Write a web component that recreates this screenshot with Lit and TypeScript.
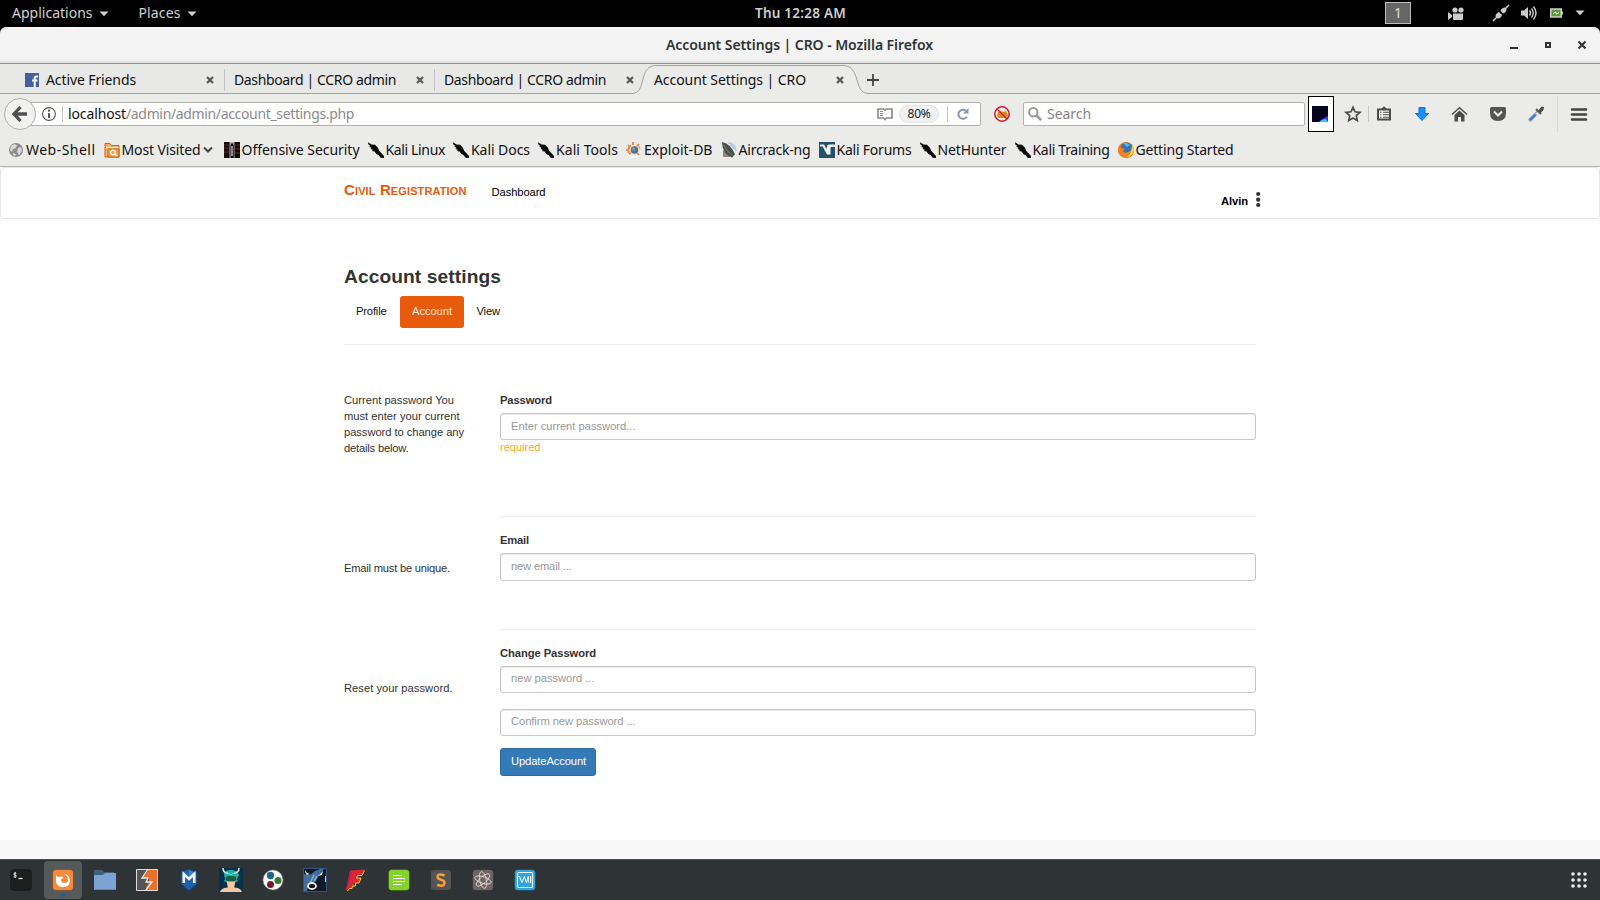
import { LitElement, html, css, svg } from "lit";
import { customElement, property } from "lit/decorators.js";

/** Text label that spreads its letters to fill a given width. */
@customElement("fit-label")
class FitLabel extends LitElement {
  @property({ type: Number }) w = 0;
  @property() text = "";
  static styles = css`
    :host { display: inline-block; white-space: pre; flex: none; }
    span { display: inline-block; }
  `;
  render() { return html`<span>${this.text}</span>`; }
  async firstUpdated() {
    const s = this.renderRoot.querySelector("span") as HTMLElement;
    const fit = () => {
      s.style.letterSpacing = "0px";
      const n = s.getBoundingClientRect().width;
      s.style.letterSpacing = (this.w - n) / this.text.length + "px";
      this.style.width = this.w + "px";
    };
    fit();
    await document.fonts.ready;
    fit();
  }
}

const ic = (w: number, h: number, body: unknown) =>
  html`<svg class="ic" width=${w} height=${h} viewBox="0 0 ${w} ${h}">${body}</svg>`;

const caret = () => ic(10, 6, svg`<path d="M.5 .5h9L5 5.2z" fill="#d0d0d0"/>`);
const closeX = () => ic(8, 8, svg`<path d="M1 1l6 6M7 1L1 7" stroke="#555a5c" stroke-width="2.3"/>`);

const dragon = () => ic(16, 16, svg`<path d="M0 .3L3.500 2.400 7 2.800 9.800 5.500 11.300 9 12.600 10.300 16 14 15.900 16 12.600 15.800 10.800 13.200 8.300 11.900 6.600 9.600 3.800 9 5 7.900 2.400 6.800 3.800 6 1 4.400 2.400 3.900 .4 2.400z" fill="#0a0a0a"/>`);

const bmIcons: Record<string, () => unknown> = {
  globe: () => ic(16, 16, svg`<circle cx="8" cy="8" r="7" fill="#8c8c8c"/><path d="M3 4l3-2 3 1-1 3-3 1-1 3-2-2zM10 6l3-1 1 4-3 4-2-3zM5 11l3 1-1 2-2-1z" fill="#d9d9d9"/>`),
  folder: () => ic(16, 16, svg`<path d="M1 15V1.5h5l1.5 2H15V15z" fill="#f0b070" stroke="#c9660f"/><path d="M2 5.5h12.5" stroke="#fff"/><path d="M4 15V7h11v8z" fill="#f5a04a" stroke="#c9660f"/><circle cx="9" cy="10.5" r="2.3" fill="none" stroke="#fff" stroke-width="1.2"/><path d="M11 12l2 2" stroke="#fff" stroke-width="1.2"/>`),
  offsec: () => ic(16, 16, svg`<path d="M0 0h16v16H0z" fill="#1b0808"/><path d="M0 3h5M0 6h5M0 10h5M11 3h5M11 7h5M11 11h5" stroke="#4e2c2c" stroke-width="1.2"/><path d="M5.500 0h5v16h-5z" fill="#a9a4a4"/><path d="M6.500 3l1.500-2 1.700 2v13H6.500z" fill="#111"/><path d="M8 4v10" stroke="#fff" stroke-width="1"/>`),
  dragon,
  exploit: () => ic(16, 16, svg`<path d="M2 12.500l5 2.500 7-1" stroke="#fff" stroke-width="2" fill="none"/><path d="M2 3l2 2M7 0v3M13 2l-2 2M0 8h3M3 12l2-1M13 13l-2-2" stroke="#ee7733" stroke-width="1.700"/><path d="M3 11a6 6 0 0 1 2-7.500" stroke="#f18b4e" stroke-width="2.200" fill="none"/><path d="M10 3q3 .5 4 4" stroke="#f5a678" stroke-width="1.500" fill="none"/><circle cx="8.500" cy="8" r="3.800" fill="#557287"/><circle cx="7.600" cy="7" r="1.600" fill="#829cac"/>`),
  aircrack: () => ic(16, 16, svg`<path d="M7 1q7 0 8 8M9 3q3 1 4 4" stroke="#b2c7ee" stroke-width="1.6" fill="none"/><path d="M2 8v7h8z" fill="#8f897c"/><path d="M1 0Q10 2 14 12.500L11 15.500Q1 12 1 0z" fill="#4c504d"/><path d="M3 3Q5 9 11.500 13" stroke="#6f7169" stroke-width="1.300" fill="none"/>`),
  forum: () => ic(16, 16, svg`<path d="M0 0h16v16H0z" fill="#24506b"/><path d="M1 3.500h3.500l4 8V5.500" stroke="#e9eef0" stroke-width="2.200" fill="none"/><path d="M8 12.500V4.500q0-2 2-2h6v2.500h-4.500v7.500z" fill="#f4f6f7"/>`),
  firefox: () => ic(16, 16, svg`<circle cx="8" cy="8" r="8" fill="#ef7a1a"/><circle cx="8.6" cy="6.5" r="5.9" fill="#2c74bd"/><path d="M5 1q4-1 7 2l-3 2z" fill="#58b9e8"/><path d="M1.4 3Q1 6 4 6l3 1-2 2q2 3 5 1 4-1 4-6 3 4 1 8-3 5-8 4-7-2-7-8z" fill="#f58220"/><path d="M14 3q3 4 1 8-3 5-7 4 6-2 6-12z" fill="#ffd23f"/>`),
};

const bookmarks: [string, string, number][] = [
  ["globe", "Web-Shell", 69.5], ["folder", "Most Visited", 79], ["offsec", "Offensive Security", 118],
  ["dragon", "Kali Linux", 59.5], ["dragon", "Kali Docs", 59], ["dragon", "Kali Tools", 62],
  ["exploit", "Exploit-DB", 68.5], ["aircrack", "Aircrack-ng", 72], ["forum", "Kali Forums", 75],
  ["dragon", "NetHunter", 69], ["dragon", "Kali Training", 77], ["firefox", "Getting Started", 98],
];

const tile = (c1: string, body: unknown) => ic(24, 24, svg`<rect x="1.5" y="1.5" width="21" height="21" rx="3.5" fill=${c1} stroke="#000" stroke-opacity=".25"/>${body}`);

const dock: (() => unknown)[] = [
  () => tile("#1d1f1f", svg`<path d="M7.3 5.3q-2.5-.7-2.5.6 0 1 1.4 1.2 1.3.2 1.2 1.2-.2 1.2-2.7.5M6.1 4v6" stroke="#eee" stroke-width=".9" fill="none"/><path d="M9.5 10.5h4" stroke="#eee" stroke-width="1.2"/>`),
  () => tile("#f58a3c", svg`<path d="M5 7.500L7 9l4-.5 1.500 1.500-2.500 1.500q0 3.500 3.500 3.500t3.500-3-1.500-4L13 5.500q6 1.500 6 7.500-.5 6-7 6.300-6.500-.3-7-6.300z" fill="#fff"/>`),
  () => ic(24, 24, svg`<path d="M1 2h8l2 2h10v6H1z" fill="#44617c"/><path d="M1 7h9l2-2h11v17H1z" fill="#7ba3d4"/><path d="M1 21.500h22" stroke="#6089bb"/>`),
  () => ic(24, 24, svg`<path d="M1.500 1.500h21v21h-21z" fill="#ec7028" stroke="#ddd"/><path d="M2 2h11l-5 8h6v4l-4 8H2z" fill="#555"/><path d="M13 1L7 10h6l-2 4h6l-6 8" stroke="#eee" stroke-width="1.300" fill="none"/>`),
  () => ic(24, 24, svg`<path d="M12 1l8 3v12l-8 7-8-7V4z" fill="#1e60aa" stroke="#173f72"/><path d="M12 2l7 3v5H12z" fill="#3c86cf"/><path d="M6.800 15V6l5.200 5 5.200-5v9" stroke="#f0f4fa" stroke-width="2.600" fill="none"/>`),
  () => ic(24, 24, svg`<path d="M0 0h24v24H0z" fill="#05304a"/><path d="M1 24q1-4 7-4.500h8q6 .5 7 4.500z" fill="#efc9a5"/><path d="M5 6Q6 2 12 2t8 5l-2 4 1 2.500-3 .5H8l-3-.5L6 11z" fill="#20b0ac"/><path d="M4 0q0 5 5 5M20 0q0 5-5 5" stroke="#e9e6c4" stroke-width="1.500" fill="none"/><path d="M7 9q5-2.500 10 0l.5 3-3 1.500h-5l-3-1.500z" fill="#11623a"/><path d="M7.500 13.500h9L15 20l-3 1.500L9 20z" fill="#f3c89f"/><path d="M7 4l5 3 5-3" stroke="#6ee2da" fill="none"/>`),
  () => ic(24, 24, svg`<circle cx="12" cy="12" r="10" fill="#fff" stroke="#888" stroke-width=".6"/><circle cx="9.500" cy="7.500" r="3.700" fill="#246586"/><circle cx="17" cy="12.500" r="3.500" fill="#377837"/><circle cx="9.500" cy="16.500" r="3.500" fill="#731c2c"/>`),
  () => ic(24, 24, svg`<path d="M.5 .5h23v23H.5z" fill="#101a28" stroke="#33557a"/><path d="M1 6l6 1 5-4 5-2h4l-5 6-3 6-3 2-4 1-2 7H1z" fill="#426f9d"/><path d="M2 1q0 4 5 5l-3 1-2-3z" fill="#dfe6ec"/><path d="M15 8l5-5-1 4z" fill="#e8edf1"/><path d="M11 7l-4 8M14 8l-3 5" stroke="#81add1" stroke-width="1.500"/><ellipse cx="9" cy="18" rx="4" ry="3" fill="#111" stroke="#eee" stroke-width="1.800"/><path d="M22.500 8v6" stroke="#ccc"/>`),
  () => ic(24, 24, svg`<path d="M5 2.500L19.500 1.500 17 7h-5l-1 3h4.500l-2 5H9.500L8 19l-3 1-1.500 3L1 22z" fill="#e02434"/><path d="M19.500 2.500L17 7.500h-4.500L11.500 10H16l-2 5h-3.500v3H7.500L7 20.500H4.500L2.500 23" stroke="#ffd923" stroke-width="1" fill="none"/><path d="M5.500 4L3 17" stroke="#b02058" stroke-width="1.500"/>`),
  () => tile("#85d22c", svg`<path d="M6 7.500h9M6 10.500h12M6 13.500h12M6 16.500h9" stroke="#fff" stroke-width="1.200"/>`),
  () => tile("#555453", svg`<path d="M15.500 7.500Q9 5 8.500 8.500q0 2.500 3.500 3.200 3.600.8 3.500 3.500-.5 4-7.300 1.600" stroke="#f9a13a" stroke-width="2.500" fill="none"/>`),
  () => tile("#6e6466", svg`<g fill="none" stroke="#ddd8d2" stroke-width=".9"><ellipse cx="12" cy="12" rx="3.300" ry="8.500" transform="rotate(-12 12 12)"/><ellipse cx="12" cy="12" rx="3.300" ry="8.500" transform="rotate(48 12 12)"/><ellipse cx="12" cy="12" rx="3.300" ry="8.500" transform="rotate(108 12 12)"/></g>`),
  () => tile("#2fa5dc", svg`<rect x="4.500" y="4.500" width="15" height="15" rx="1" fill="none" stroke="#e9f7fd" stroke-width="1.200"/><path d="M5 8.500h1.500l2.500 6 2.300-6 2 6L15.300 8.500v6M17.500 8v7" stroke="#fff" stroke-width="1" fill="none"/>`),
];

@customElement("app-root")
class AppRoot extends LitElement {
  static styles = css`
    :host { display: flex; flex-direction: column; width: 1600px; height: 900px; overflow: hidden;
      background: #fff; font-family: "Liberation Sans", Arial, sans-serif; font-size: 11.2px; line-height: 16px; color: #333; }
    * { box-sizing: border-box; }
    svg.ic { display: block; flex: none; overflow: visible; }
    .chrome { font: 14px/20px "Noto Sans", "Open Sans", sans-serif; color: #111; flex: none; background: #000; }
    .row { display: flex; align-items: center; }
    .top { height: 27px; color: #d0d0d0; padding: 0 0 1px 12px; }
    .top .left { width: 743px; gap: 6px; }
    .left svg { margin-top: 1px; }
    .places { margin-left: 24px; }
    .clock { font-weight: 600; font-size: 13.500px; }
    .top .right { margin-left: auto; padding-right: 15px; }
    .ws { width: 26px; height: 22px; background: #666; border: 1px solid #bbb; text-align: center; line-height: 20px; margin-right: 37px; color: #ddd; }
    .i1 { margin-right: 29px; } .i2 { margin-right: 12px; } .i3 { margin-right: 13px; } .i4 { margin-right: 12px; }
    .title { height: 37px; background: linear-gradient(#f4f4f4, #f3f3f3 33px, #d9dad7); border-bottom: 1px solid #8f918b; border-radius: 6px 6px 0 0; padding: 0 14px 0 666px; font-weight: 600; color: #2e3436; }
    .title .btns { margin-left: auto; gap: 27px; }
    .tabs { height: 30px; background: #e8e8e6; border-bottom: 1px solid #a3a5a3; padding: 2px 0 0 15px; position: relative; }
    .tab { width: 210px; height: 22px; padding: 0 10px 0 9px; border-right: 1px solid #c3c3c1; justify-content: space-between; }
    .tab.first { padding-left: 10px; }
    .tab.pre, .tab.act { border-color: transparent; }
    .tab.act { position: relative; }
    .tab .row { gap: 7px; }
    .shape { position: absolute; left: 631px; top: 0; }
    .plus { margin-left: 12px; position: relative; }
    .nav { height: 43px; background: #ebebe9; padding-left: 4px; padding-bottom: 3px; }
    .back { width: 32px; height: 32px; border-radius: 50%; border: 1px solid #adafad; background: #f1f1f0; display: grid; place-items: center; position: relative; z-index: 1; flex: none; }
    .url { width: 952px; height: 24px; margin-left: -7px; background: #fff; border: 1px solid #b2b3ae; border-radius: 2px; padding-left: 12px; flex: none; color: #8b8b8b; }
    .url .acts { margin-left: auto; padding-right: 11px; }
    .sep { width: 1px; height: 16px; background: #c5c5c5; }
    .url > .sep { margin-left: 6px; }
    .host { margin-left: 5px; color: #111; }
    .zoom { width: 40px; height: 18px; border-radius: 9px; background: #f1f1f1; border: 1px solid #e4e4e4; display: grid; place-items: center; font-size: 12px; line-height: 16px; color: #222; margin: 0 8px 0 6px; }
    .reload { margin-left: 9px; }
    .noscript { margin-left: 13px; }
    .search { width: 282px; height: 24px; background: #fff; border: 1px solid #b2b3ae; border-radius: 2px; margin: 0 3px 0 13px; padding-left: 4px; gap: 5px; color: #858585; flex: none; }
    .ext { width: 26px; height: 36px; border: 1px solid #000; background: #fff; display: grid; place-items: center start; padding-left: 3px; flex: none; }
    .star { margin: 0 7px 0 11px; }
    .clip { margin: 0 24px 0 8px; }
    .home { margin: 0 23px 0 23px; }
    .drop { margin: 0 13px 0 22px; }
    .menu { margin-left: 13px; }
    .nav .tall { height: 36px; background: #d6d6d4; }
    .marks { height: 30px; background: #ebebe9; border-bottom: 1px solid #b6b8ad; padding: 0 0 4px 8px; gap: 8px; }
    .mark { gap: 2px; } .mark svg { margin-top: 1px; }
    .chev { margin: 0 3px 0 0; }
    .page { flex: 1; display: flex; flex-direction: column; background: #fff; }
    .bar { height: 52px; border: 1px solid #e7e7e7; border-radius: 4px; display: flex; padding: 0 338px 0 343px; color: #000; flex: none; }
    .brand { font-size: 15px; font-weight: 700; font-variant: small-caps; color: #e95b0c; padding-top: 14px; }
    .dash { padding-top: 16px; margin-left: 25px; }
    .user { margin-left: auto; display: flex; gap: 8px; padding-top: 24px; height: 50px; font-weight: 700; }
    .user fit-label { margin-top: 1px; }
    .content { width: 912px; margin-left: 344px; height: 621px; }
    h3 { font-size: 19.200px; line-height: 22px; margin: 0; padding-top: 47px; }
    .pills { display: flex; gap: 1.500px; margin-top: 8px; padding-bottom: 16px; border-bottom: 1px solid #eee; color: #111; }
    .pill { height: 32px; padding: 7px 12px; border-radius: 3px; }
    .pill.on { background: #e95b0c; color: #fbeadf; margin-right: -1px; }
    .sec { display: grid; grid-template-columns: 156px 756px; }
    .s1 { height: 172px; } .s2 { height: 113px; }
    .s1 .side, .s1 .form { padding-top: 47px; }
    .side { display: flex; flex-direction: column; }
    .s2 .form { padding-top: 15px; } .s2 .side { padding-top: 43px; }
    .s3 .form { padding-top: 15px; } .s3 .side { padding-top: 50px; }
    .s1 .form, .s2 .form { border-bottom: 1px solid #eee; }
    label { display: flex; font-weight: 700; margin-bottom: 5px; }
    .input { display: flex; height: 27px; border: 1px solid #c6c6c6; border-radius: 3px; box-shadow: inset 0 1px 1px rgba(0,0,0,.075); padding: 4px 10px; color: #999; background: #fff; }
    .s2 .input { height: 28px; }
    .s3 .input { padding-top: 3px; }
    .input + .input { margin-top: 16px; }
    .req { display: flex; color: #ffa81f; line-height: 15px; }
    .btn { display: flex; margin-top: 12px; width: 96px; height: 28px; background: #337ab7; border: 1px solid #2e6da4; border-radius: 3px; color: #fff; padding: 4px 10px; }
    .foot { flex: 1; background: #f8f8f8; }
    .dock { height: 41px; flex: none; background: #2e3436; border-top: 1px solid #4b504e; padding-left: 2px; }
    .slot { width: 38px; height: 38px; margin-right: 4px; border-radius: 4px; display: grid; place-items: center; position: relative; }
    .slot.on { background: #555a5a; }
    .dot { position: absolute; left: 17px; bottom: 2px; width: 4px; height: 4px; border-radius: 50%; background: #215d9c; }
    .grid { margin-left: auto; padding-right: 13px; }
  `;

  private t(text: string, w: number) { return html`<fit-label .text=${text} .w=${w}></fit-label>`; }

  render() {
    return html`
      <div class="chrome">
        <div class="top row">
          <div class="left row">${this.t("Applications", 80.5)}${caret()}<div class="places">${this.t("Places", 42)}</div>${caret()}</div>
          <div class="clock">${this.t("Thu 12:28 AM", 91)}</div>
          <div class="right row">
            <div class="ws">1</div>
            <div class="i1">${ic(16, 13, svg`<g fill="#ccc"><circle cx="7" cy="3" r="2.600"/><circle cx="13" cy="3" r="2.600"/><path d="M5 6.500h10V12q0 1-1 1H6q-1 0-1-1zM0 5l4 3v2l-4 3z"/></g>`)}</div>
            <div class="i2">${ic(16, 16, svg`<path d="M0 16L5 11M11 5l5-5" stroke="#ccc" stroke-width="1.500"/><path d="M2.500 11.500q0-3 3.500-4.500l3 3q-1 3.500-4.500 3.500zM7.500 6q1-3.500 4.500-3.500L13.500 4q0 3.500-3.500 4.500z" fill="#ccc"/>`)}</div>
            <div class="i3">${ic(16, 16, svg`<path d="M0 5.500h3L7 2v12l-4-3.500H0z" fill="#ccc"/><path d="M8.500 5.500q2 2.500 0 5M10.500 3.500q3.500 4.500 0 9M12.500 1.500q5 6.500 0 13" stroke="#ccc" stroke-width="1.400" fill="none"/>`)}</div>
            <div class="i4">${ic(13, 10, svg`<rect x=".75" y="1" width="10.500" height="8" fill="#5b9a32" stroke="#ccc" stroke-width="1.500"/><path d="M11.500 3.500H13v3h-1.500z" fill="#ccc"/><path d="M3 6l2.500-2 1 2L9 4.500" stroke="#fff" fill="none"/>`)}</div>
            ${caret()}
          </div>
        </div>
        <div class="title row">
          ${this.t("Account Settings | CRO - Mozilla Firefox", 267)}
          <div class="btns row">
            ${ic(8, 8, svg`<path d="M0 7h8" stroke="#2e3436" stroke-width="2"/>`)}
            ${ic(6, 6, svg`<path d="M1 1h4v4H1z" fill="none" stroke="#2e3436" stroke-width="2"/>`)}
            ${ic(8, 8, svg`<path d="M.5 .5l7 7M7.500 .5l-7 7" stroke="#2e3436" stroke-width="2"/>`)}
          </div>
        </div>
        <div class="tabs row">
          <svg class="shape" width="242" height="30" viewBox="0 0 242 30"><path d="M0 29.500C8 29.500 9.500 25 12 15S18 1.500 26 1.500H211C220 1.500 223 6 226 16S231 29.500 238 29.500V30H0z" fill="#ebebe9"/><path d="M0 29.500C8 29.500 9.500 25 12 15S18 1.500 26 1.500H211C220 1.500 223 6 226 16S231 29.500 238 29.500" fill="none" stroke="#9ca1a8"/></svg>
          <div class="tab row first"><div class="row">${ic(14, 14, svg`<path d="M0 0h14v14H0z" fill="#4460a0"/><path d="M13 3.500h-1.500q-1.800 0-1.800 2V14M7 7.500h5.500" stroke="#fff" stroke-width="2" fill="none"/>`)}${this.t("Active Friends", 90)}</div>${closeX()}</div>
          <div class="tab row">${this.t("Dashboard | CCRO admin", 162)}${closeX()}</div>
          <div class="tab row pre">${this.t("Dashboard | CCRO admin", 162)}${closeX()}</div>
          <div class="tab row act">${this.t("Account Settings | CRO", 152)}${closeX()}</div>
          <div class="plus">${ic(12, 12, svg`<path d="M6 0v12M0 6h12" stroke="#444" stroke-width="1.800"/>`)}</div>
        </div>
        <div class="nav row">
          <div class="back">${ic(16, 16, svg`<path d="M8.500 1L2 8l6.500 7M2.500 8H15" stroke="#4e5052" stroke-width="3.300" fill="none"/>`)}</div>
          <div class="url row">
            ${ic(14, 14, svg`<circle cx="7" cy="7" r="6.400" fill="none" stroke="#555" stroke-width="1.100"/><path d="M7 6v5" stroke="#444" stroke-width="1.800"/><circle cx="7" cy="3.700" r="1.100" fill="#444"/>`)}
            <div class="sep"></div>
            <div class="host">${this.t("localhost", 58)}</div>${this.t("/admin/admin/account_settings.php", 228)}
            <div class="acts row">
              ${ic(16, 12, svg`<path d="M1 1h5.500L8 2.200 9.500 1H15v9H9.500L8 11.500 6.500 10H1z" fill="none" stroke="#8b8b8b" stroke-width="1.700"/><path d="M3 3.500h3M3 5.500h3M3 7.500h3" stroke="#8b8b8b"/>`)}
              <div class="zoom">${this.t("80%", 23)}</div>
              <div class="sep"></div>
              <div class="reload">${ic(12, 12, svg`<path d="M9.800 8.800A4.600 4.600 0 1 1 9 2.800" stroke="#8797a8" stroke-width="2" fill="none"/><path d="M11.500 0v5.500H6z" fill="#8797a8"/>`)}</div>
            </div>
          </div>
          <div class="noscript">${ic(16, 16, svg`<path d="M3 10l1-4 3-1 2 1 3-1 2 4-2 3H5z" fill="#dd8b1c"/><circle cx="8" cy="8" r="7.200" fill="none" stroke="#cf1c24" stroke-width="1.500"/><path d="M3 3l10 10" stroke="#cf1c24" stroke-width="1.300"/>`)}</div>
          <div class="search row">${ic(14, 14, svg`<circle cx="5.300" cy="5.300" r="4.200" fill="none" stroke="#999" stroke-width="2"/><path d="M8.500 8.500l4.700 4.700" stroke="#999" stroke-width="2.500"/>`)}${this.t("Search", 44)}</div>
          <div class="ext">${ic(16, 16, svg`<path d="M0 0h16v16H0z" fill="#04041c"/><path d="M7 16q3-4 9-6v6z" fill="#4d21f0"/><path d="M7 16q3-3 7-3l2 3z" fill="#16dcf7"/>`)}</div>
          <div class="star">${ic(16, 16, svg`<path d="M8 1.300l2 4.500 5 .5-3.700 3.300 1 4.900L8 12l-4.300 2.500 1-4.900L1 6.300l5-.5z" fill="none" stroke="#4c4c4c" stroke-width="1.700"/>`)}</div>
          <div class="sep"></div>
          <div class="clip">${ic(14, 14, svg`<path d="M1 2.500h12v10H1z" fill="#f8f8f8" stroke="#4c4c4c" stroke-width="2"/><path d="M4 2L7-.8l3 2.800z" fill="#4c4c4c"/><path d="M3 5.200h1.500M3 7.700h1.500M3 10.200h1.500M6 5.200h6M6 7.700h6M6 10.200h6" stroke="#4c4c4c" stroke-width="1.100"/>`)}</div>
          ${ic(14, 14, svg`<path d="M4 .5h6v6h3.500L7 13.500 .5 6.500H4z" fill="#1690ff" stroke="#1270c8"/>`)}
          <div class="home">${ic(15, 15, svg`<path d="M0 7.500L7.500 .8 15 7.500" stroke="#4c4c4c" stroke-width="1.500" fill="none"/><path d="M2.500 8l5-4.500L12.500 8v6.500H9V10H6v4.500H2.500z" fill="#4c4c4c"/>`)}</div>
          ${ic(16, 14, svg`<path d="M1.500 0h13Q16 0 16 1.500V6q0 8-8 8T0 6V1.500Q0 0 1.500 0z" fill="#555"/><path d="M4 4.500l4 4 4-4" stroke="#f0f0f0" stroke-width="2" fill="none"/>`)}
          <div class="drop">${ic(16, 16, svg`<path d="M1 15L10 6" stroke="#a5a5a5" stroke-width="3.500"/><path d="M2 14L7.500 8.500" stroke="#416ee0" stroke-width="2"/><path d="M8.500 8.500L10.500 6.500" stroke="#e8e8f4" stroke-width="2"/><path d="M8 3l5 5" stroke="#555" stroke-width="2"/><path d="M10 5l3.500-4.500L16 1l-.5 3-3 3z" fill="#4d4d4d"/>`)}</div>
          <div class="sep tall"></div>
          <div class="menu">${ic(16, 13, svg`<path d="M1 1.500h14M1 6.500h14M1 11.500h14" stroke="#444" stroke-width="2.600" stroke-linecap="round"/>`)}</div>
        </div>
        <div class="marks row">
          ${bookmarks.map(([i, s, w]) => html`<div class="mark row">${bmIcons[i]()}${this.t(s, w)}${i === "folder" ? html`<div class="chev">${ic(10, 8, svg`<path d="M1 1.500l4 4 4-4" stroke="#444" stroke-width="2" fill="none"/>`)}</div>` : ""}</div>`)}
        </div>
      </div>
      <div class="page">
        <div class="bar">
          <div class="brand">${this.t("Civil Registration", 122.5)}</div>
          <div class="dash">${this.t("Dashboard", 54)}</div>
          <div class="user">${this.t("Alvin", 27)}${ic(5, 16, svg`<g fill="#333"><circle cx="2.200" cy="2" r="2.100"/><circle cx="2.200" cy="7.700" r="2.100"/><circle cx="2.200" cy="13" r="2.100"/></g>`)}</div>
        </div>
        <div class="content">
          <h3>${this.t("Account settings", 157)}</h3>
          <div class="pills"><div class="pill">${this.t("Profile", 30.5)}</div><div class="pill on">${this.t("Account", 40)}</div><div class="pill">${this.t("View", 23.5)}</div></div>
          <div class="sec s1">
            <div class="side">
              ${this.t("Current password You", 110)}
              ${this.t("must enter your current", 115.5)}
              ${this.t("password to change any", 120)}
              ${this.t("details below.", 64.5)}
            </div>
            <div class="form"><label>${this.t("Password", 52)}</label><div class="input">${this.t("Enter current password...", 124.5)}</div><div class="req">${this.t("required", 40.5)}</div></div>
          </div>
          <div class="sec s2">
            <div class="side">${this.t("Email must be unique.", 106)}</div>
            <div class="form"><label>${this.t("Email", 29)}</label><div class="input">${this.t("new email ...", 60.5)}</div></div>
          </div>
          <div class="sec s3">
            <div class="side">${this.t("Reset your password.", 108.5)}</div>
            <div class="form"><label>${this.t("Change Password", 96)}</label><div class="input">${this.t("new password ...", 83.5)}</div><div class="input">${this.t("Confirm new password ...", 124.5)}</div><div class="btn">${this.t("UpdateAccount", 75)}</div></div>
          </div>
        </div>
        <div class="foot"></div>
      </div>
      <div class="dock row">
        ${dock.map((d, i) => html`<div class="slot ${i === 1 ? "on" : ""}">${d()}${i === 1 ? html`<div class="dot"></div>` : ""}</div>`)}
        <div class="grid">${ic(16, 16, svg`<g fill="#eee">${[2, 8, 14].map(y => [2, 8, 14].map(x => svg`<circle cx=${x} cy=${y} r="1.800"/>`))}</g>`)}</div>
      </div>
    `;
  }
}
